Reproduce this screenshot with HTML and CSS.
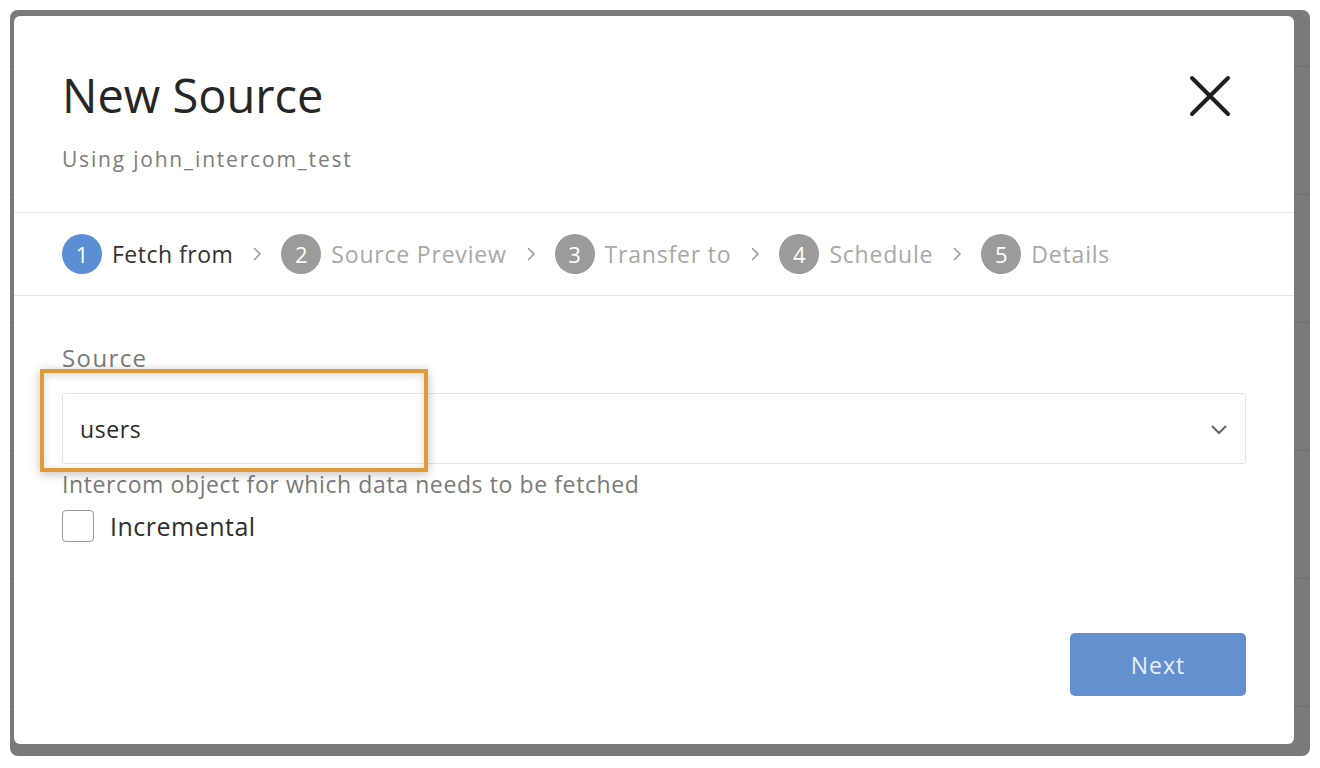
FILE: index.html
```html
<!DOCTYPE html>
<html>
<head>
<meta charset="utf-8">
<link rel="stylesheet" href="styles.css">
</head>
<body>
<div class="backdrop">
  <div class="modal">
    <div class="header">
      <div class="titles">
        <h1 class="title">New Source</h1>
        <div class="subtitle">Using john_intercom_test</div>
      </div>
      <button class="close" aria-label="Close">
        <svg width="44" height="44" viewBox="0 0 44 44"><path d="M4 4 L40 40 M40 4 L4 40" stroke="#1f1f1f" stroke-width="4" stroke-linecap="round"/></svg>
      </button>
    </div>
    <div class="steps">
      <div class="step active"><span class="num">1</span><span class="label">Fetch from</span></div>
      <span class="sep"><svg width="10" height="16" viewBox="0 0 10 16"><path d="M2 2 L8 8 L2 14" fill="none" stroke="#9a9a9a" stroke-width="1.5"/></svg></span>
      <div class="step"><span class="num">2</span><span class="label">Source Preview</span></div>
      <span class="sep"><svg width="10" height="16" viewBox="0 0 10 16"><path d="M2 2 L8 8 L2 14" fill="none" stroke="#9a9a9a" stroke-width="1.5"/></svg></span>
      <div class="step"><span class="num">3</span><span class="label">Transfer to</span></div>
      <span class="sep"><svg width="10" height="16" viewBox="0 0 10 16"><path d="M2 2 L8 8 L2 14" fill="none" stroke="#9a9a9a" stroke-width="1.5"/></svg></span>
      <div class="step"><span class="num">4</span><span class="label">Schedule</span></div>
      <span class="sep"><svg width="10" height="16" viewBox="0 0 10 16"><path d="M2 2 L8 8 L2 14" fill="none" stroke="#9a9a9a" stroke-width="1.5"/></svg></span>
      <div class="step"><span class="num">5</span><span class="label">Details</span></div>
    </div>
    <div class="body">
      <div class="field">
        <label class="field-label">Source</label>
        <div class="select">
          <span class="value">users</span>
          <svg class="chev" width="18" height="12" viewBox="0 0 18 12"><path d="M2 3 L9 10 L16 3" fill="none" stroke="#666" stroke-width="2"/></svg>
          <div class="highlight"></div>
        </div>
        <div class="help">Intercom object for which data needs to be fetched</div>
        <label class="check"><span class="box"></span><span>Incremental</span></label>
      </div>
      <div class="footer">
        <button class="next">Next</button>
      </div>
    </div>
  </div>
</div>
</body>
</html>
```

FILE: styles.css
```css
* { box-sizing: border-box; }
html, body { margin: 0; padding: 0; background: #fff; }
body {
  font-family: "Open Sans", "Noto Sans", sans-serif;
  width: 1320px;
  height: 768px;
  overflow: hidden;
}
.backdrop {
  margin: 10px 10px 0 10px;
  width: 1300px;
  height: 746px;
  border-radius: 8px;
  padding: 6px 16px 12px 4px;
  background-color: #7a7a7a;
  background-image: repeating-linear-gradient(to bottom, transparent 0, transparent 56px, #6f6f6f 56px, #6f6f6f 57px, transparent 57px, transparent 128px);
}
.modal {
  background: #fff;
  border-radius: 6px;
  height: 100%;
  display: flex;
  flex-direction: column;
  overflow: hidden;
}
.header {
  display: flex;
  justify-content: space-between;
  align-items: flex-start;
  padding: 50px 62px 0 48px;
  height: 197px;
  border-bottom: 1px solid #e6e6e6;
}
.title {
  margin: 0;
  font-size: 47px;
  font-weight: 400;
  line-height: 58px;
  color: #262626;
}
.subtitle {
  margin-top: 22px;
  font-size: 21px;
  line-height: 26px;
  color: #7d7d7d;
  letter-spacing: 1.8px;
}
.close {
  border: 0;
  background: transparent;
  padding: 0;
  margin-top: 8px;
  width: 44px;
  height: 44px;
  cursor: pointer;
}
.steps {
  display: flex;
  align-items: center;
  height: 83px;
  padding: 0 48px;
  border-bottom: 1px solid #e6e6e6;
}
.step { display: flex; align-items: center; }
.num {
  width: 40px;
  height: 40px;
  border-radius: 50%;
  background: #9b9b9b;
  color: #fff;
  font-size: 22px;
  display: flex;
  align-items: center;
  justify-content: center;
  margin-right: 10px;
}
.step.active .num { background: #5b8fd4; }
.label { font-size: 23px; line-height: 30px; color: #a8a8a8; letter-spacing: 0.8px; }
.step.active .label { color: #333; letter-spacing: 0.5px; }
.sep {
  display: flex;
  align-items: center;
  margin: 0 19px 0 19px;
}
.body {
  flex: 1;
  display: flex;
  flex-direction: column;
  padding: 48px 48px 48px 48px;
}
.field { display: flex; flex-direction: column; }
.field-label {
  font-size: 24px;
  color: #7a7a7a;
  line-height: 28px;
  margin-bottom: 21px;
  letter-spacing: 1.4px;
}
.select {
  position: relative;
  height: 71px;
  border: 1px solid #e4e4e4;
  border-radius: 3px;
  display: flex;
  align-items: center;
  justify-content: space-between;
  padding: 0 17px 0 17px;
}
.value { font-size: 23px; color: #2a2a2a; letter-spacing: 0.6px; }
.highlight {
  position: absolute;
  left: -23px;
  top: -25px;
  width: 388px;
  height: 103px;
  border: 4px solid #e09a3a;
  box-shadow: 0 2px 10px rgba(0,0,0,0.25), inset 0 2px 8px rgba(0,0,0,0.15);
  pointer-events: none;
}
.help {
  font-size: 23px;
  color: #7a7a7a;
  line-height: 28px;
  margin-top: 6px;
  letter-spacing: 0.6px;
}
.check {
  display: flex;
  align-items: center;
  margin-top: 12px;
  font-size: 25px;
  line-height: 30px;
  color: #2e2e2e;
  letter-spacing: 0.5px;
}
.box {
  width: 32px;
  height: 32px;
  border: 1.5px solid #9a9a9a;
  border-radius: 4px;
  margin-right: 16px;
}
.footer {
  margin-top: auto;
  display: flex;
  justify-content: flex-end;
}
.next {
  width: 176px;
  height: 63px;
  border: 0;
  border-radius: 5px;
  background: #6391d0;
  color: #eaf0f9;
  font-family: inherit;
  font-size: 23px;
  letter-spacing: 1px;
}
```
